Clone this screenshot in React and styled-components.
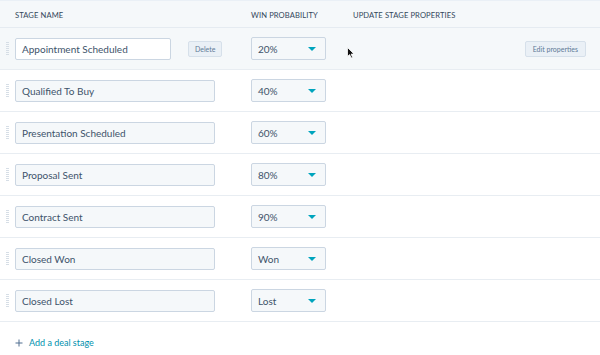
import React from 'react';
import styled, { createGlobalStyle } from 'styled-components';

const GlobalStyle = createGlobalStyle`
  html, body {
    margin: 0;
    padding: 0;
    background: #ffffff;
  }
  body {
    font-family: Lato, "Open Sans", sans-serif;
    color: #33475b;
  }
`;

const Table = styled.div`
  position: relative;
  width: 600px;
  height: 355px;
  border-top: 1px solid #eaf0f6;
  box-sizing: border-box;
  overflow: hidden;
`;

const Grid = styled.div`
  display: grid;
  grid-template-columns: 251px 102px 1fr;
  align-items: center;
`;

const HeaderRow = styled(Grid)`
  height: 25px;
  background: #f5f8fa;
  border-bottom: 1px solid #e5ebf1;
  font-size: 7.6px;
  letter-spacing: 0.1px;
  text-transform: uppercase;
  color: #33475b;
  padding-top: 1px;

  & > span:first-child {
    padding-left: 15px;
  }
`;

const Row = styled(Grid)`
  height: 41px;
  border-bottom: 1px solid #e8edf2;
  background: ${({ $active }) => ($active ? '#f5f8fa' : '#ffffff')};
  padding-right: 14px;
`;

const NameCell = styled.div`
  display: flex;
  align-items: center;
  padding-left: 6px;
`;

const Handle = styled.div`
  width: 3px;
  height: 13px;
  margin-right: 6px;
  background: repeating-linear-gradient(
    to bottom,
    #d6dee6 0 1px,
    transparent 1px 2px
  );
`;

const NameInput = styled.div`
  box-sizing: border-box;
  width: ${({ $active }) => ($active ? '156px' : '200px')};
  height: 22px;
  display: flex;
  align-items: center;
  padding-left: 6px;
  border: 1px solid #cbd6e2;
  border-radius: 2px;
  background: ${({ $active }) => ($active ? '#ffffff' : '#f5f8fa')};
  font-size: 10px;
  color: #3d536a;
`;

const SmallButton = styled.div`
  box-sizing: border-box;
  height: 16px;
  padding: 0 ${({ $wide }) => ($wide ? '7px' : '6px')};
  margin-left: ${({ $ml }) => $ml || 0};
  display: inline-flex;
  align-items: center;
  border: 1px solid #d6e0ea;
  border-radius: 2px;
  background: #eaf0f6;
  font-size: 7px;
  color: #5f7a96;
`;

const Select = styled.div`
  box-sizing: border-box;
  width: 75px;
  height: 23px;
  display: flex;
  align-items: center;
  justify-content: space-between;
  padding: 0 9px 0 6px;
  border: 1px solid #cbd6e2;
  border-radius: 2px;
  background: #f5f8fa;
  font-size: 10px;
  color: #3d536a;
`;

const Caret = styled.span`
  width: 0;
  height: 0;
  border-left: 4px solid transparent;
  border-right: 4px solid transparent;
  border-top: 4px solid #00a4bd;
`;

const PropsCell = styled.div`
  display: flex;
  justify-content: flex-end;
`;

const AddStage = styled.div`
  display: flex;
  align-items: center;
  gap: 6px;
  padding: 15px 0 0 15px;
  font-size: 9px;
  color: #0091ae;
`;

const Cursor = styled.svg`
  position: absolute;
  left: 347px;
  top: 46px;
`;

const stages = [
  { name: 'Appointment Scheduled', prob: '20%' },
  { name: 'Qualified To Buy', prob: '40%' },
  { name: 'Presentation Scheduled', prob: '60%' },
  { name: 'Proposal Sent', prob: '80%' },
  { name: 'Contract Sent', prob: '90%' },
  { name: 'Closed Won', prob: 'Won' },
  { name: 'Closed Lost', prob: 'Lost' },
];

export default function App() {
  return (
    <>
      <GlobalStyle />
      <Table>
        <HeaderRow>
          <span>Stage name</span>
          <span>Win probability</span>
          <span>Update stage properties</span>
        </HeaderRow>
        {stages.map((s, i) => {
          const active = i === 0;
          return (
            <Row key={s.name} $active={active}>
              <NameCell>
                <Handle />
                <NameInput $active={active}>{s.name}</NameInput>
                {active && <SmallButton $ml="17px">Delete</SmallButton>}
              </NameCell>
              <Select>
                <span>{s.prob}</span>
                <Caret />
              </Select>
              <PropsCell>
                {active && <SmallButton $wide>Edit properties</SmallButton>}
              </PropsCell>
            </Row>
          );
        })}
        <AddStage>
          <svg width="8" height="8" viewBox="0 0 8 8">
            <path d="M4 0.5v7M0.5 4h7" stroke="#516f90" strokeWidth="1" />
          </svg>
          <span>Add a deal stage</span>
        </AddStage>
        <Cursor width="8" height="12" viewBox="0 0 8 12">
          <path d="M0.5 0.5 L0.5 9.5 L2.6 7.6 L4.2 11 L5.6 10.4 L4.1 7.1 L7 7 Z" fill="#111" stroke="#fff" strokeWidth="0.8" />
        </Cursor>
      </Table>
    </>
  );
}
